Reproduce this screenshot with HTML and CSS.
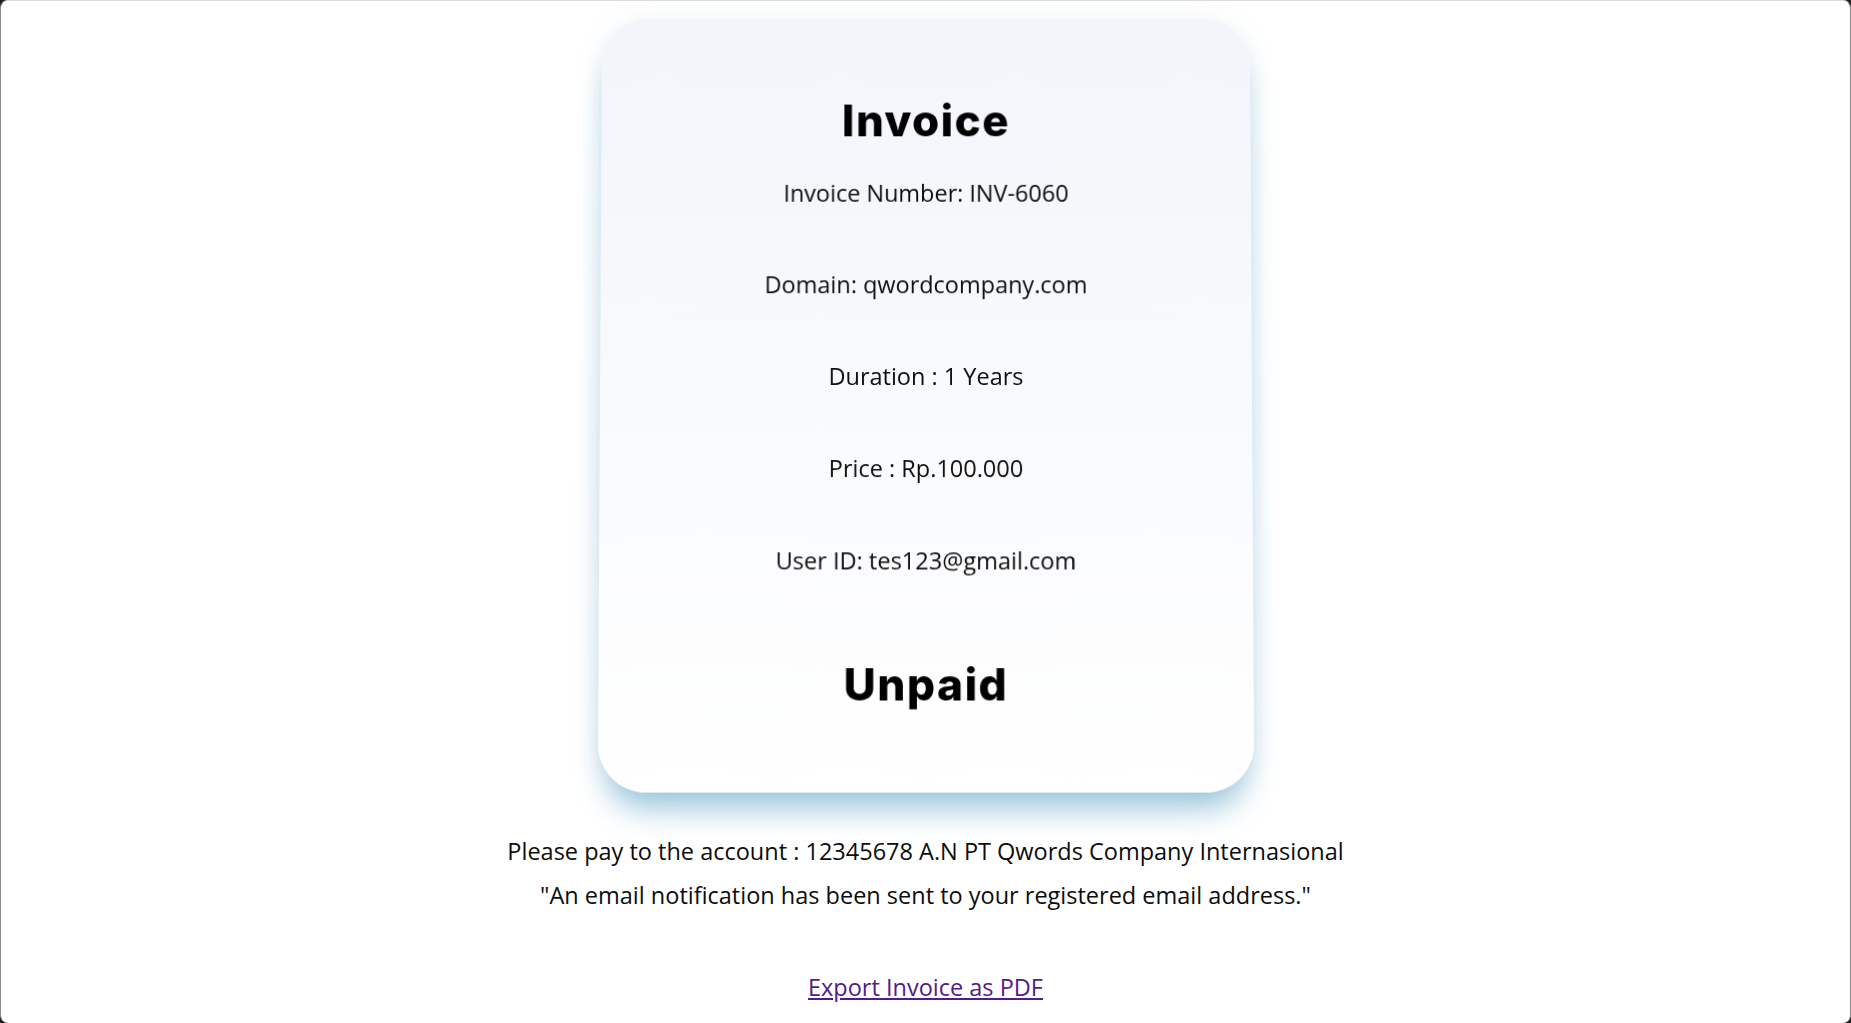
FILE: index.html
```html
<!DOCTYPE html>
<html lang="en">
<head>
<meta charset="utf-8">
<title>Invoice</title>
<link rel="stylesheet" href="styles.css">
</head>
<body>
  <main class="page">
    <section class="card">
      <h1 class="title">Invoice</h1>
      <div class="rows">
        <p>Invoice Number: INV-6060</p>
        <p>Domain: qwordcompany.com</p>
        <p>Duration : 1 Years</p>
        <p>Price : Rp.100.000</p>
        <p>User ID: tes123@gmail.com</p>
      </div>
      <h2 class="title status">Unpaid</h2>
    </section>
    <div class="notes">
      <p>Please pay to the account : 12345678 A.N PT Qwords Company Internasional</p>
      <p>"An email notification has been sent to your registered email address."</p>
    </div>
    <a class="export" href="#">Export Invoice as PDF</a>
  </main>
</body>
</html>
```
FILE: styles.css
```css
html {
  background: #1f1f1f;
  height: 100%;
}
body {
  margin: 0;
  height: 1023px;
  box-sizing: border-box;
  background: #ffffff;
  border-radius: 8px;
  border-top: 1px solid #dcdcdc;
  border-left: 1px solid #8c8c8c;
  border-right: 1px solid #8c8c8c;
  overflow: hidden;
  font-family: "Open Sans", "Liberation Sans", sans-serif;
  font-size: 23.5px;
  color: #0d0d0d;
}
.page {
  display: flex;
  flex-direction: column;
  align-items: center;
  text-align: center;
}
.card {
  margin-top: 15px;
  width: 652px;
  box-sizing: border-box;
  padding: 73px 40px 77px;
  border-radius: 48px;
  background: linear-gradient(180deg, #f2f5fa 0%, #ffffff 100%);
  box-shadow: 0 24px 30px -8px rgba(55, 140, 185, 0.48), 0 0 24px rgba(150, 180, 210, 0.15);
  transform: perspective(1000px) rotateX(1deg);
}
.title {
  margin: 0;
  font-family: Inter, "Liberation Sans", sans-serif;
  font-weight: 800;
  font-size: 44px;
  line-height: 60px;
  letter-spacing: 1.5px;
  color: #000;
}
.rows {
  margin-top: 28px;
  display: flex;
  flex-direction: column;
  gap: 62px;
}
.rows p, .notes p {
  margin: 0;
  line-height: 30px;
}
.status {
  margin-top: 78px;
}
.notes {
  margin-top: 46px;
  display: flex;
  flex-direction: column;
  gap: 14px;
}
.export {
  margin-top: 62px;
  line-height: 30px;
  color: #551a8b;
  text-decoration: underline;
}
```
